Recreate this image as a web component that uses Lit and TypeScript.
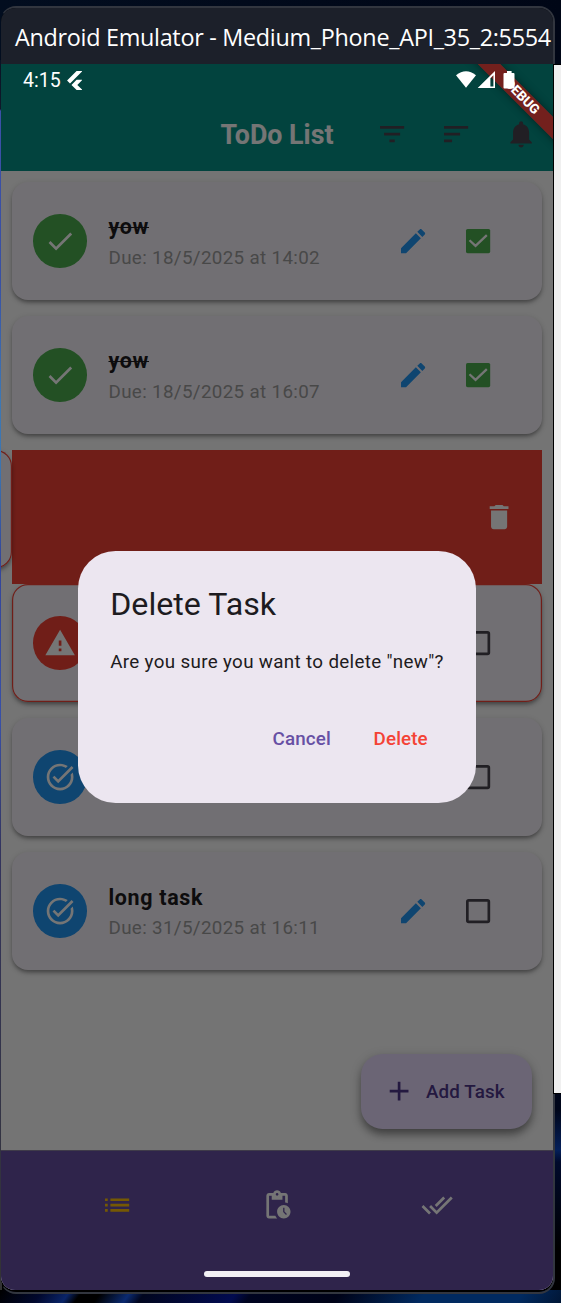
import { LitElement, html, css, svg } from "lit";
import { customElement, property } from "lit/decorators.js";
import { classMap } from "lit/directives/class-map.js";

const ICONS: Record<string, string> = {
  filter: "M10 18h4v-2h-4v2zM3 6v2h18V6H3zm3 7h12v-2H6v2z",
  sort: "M3 18h6v-2H3v2zM3 6v2h18V6H3zm0 7h12v-2H3v2z",
  bell: "M12 22c1.1 0 2-.9 2-2h-4c0 1.1.89 2 2 2zm6-6v-5c0-3.07-1.64-5.64-4.5-6.32V4c0-.83-.67-1.5-1.5-1.5s-1.5.67-1.5 1.5v.68C7.63 5.36 6 7.92 6 11v5l-2 2v1h16v-1l-2-2z",
  check: "M9 16.17L4.83 12l-1.42 1.41L9 19 21 7l-1.41-1.41z",
  edit: "M3 17.25V21h3.75L17.81 9.94l-3.75-3.75L3 17.25zM20.71 7.04c.39-.39.39-1.02 0-1.41l-2.34-2.34c-.39-.39-1.02-.39-1.41 0l-1.83 1.83 3.75 3.75 1.83-1.83z",
  trash: "M6 19c0 1.1.9 2 2 2h8c1.1 0 2-.9 2-2V7H6v12zM19 4h-3.5l-1-1h-5l-1 1H5v2h14V4z",
  warning: "M1 21h22L12 2 1 21zm12-3h-2v-2h2v2zm0-4h-2v-4h2v4z",
  task: "M22 5.18L10.59 16.6l-4.24-4.24 1.41-1.41 2.83 2.83 10-10L22 5.18zm-2.21 5.04c.13.57.21 1.17.21 1.78 0 4.42-3.58 8-8 8s-8-3.58-8-8 3.58-8 8-8c1.58 0 3.04.46 4.28 1.25l1.44-1.44C16.1 2.67 14.13 2 12 2 6.48 2 2 6.48 2 12s4.48 10 10 10 10-4.48 10-10c0-1.19-.22-2.33-.6-3.39l-1.61 1.61z",
  add: "M19 13h-6v6h-2v-6H5v-2h6V5h2v6h6v2z",
  list: "M3 13h2v-2H3v2zm0 4h2v-2H3v2zm0-8h2V7H3v2zm4 4h14v-2H7v2zm0 4h14v-2H7v2zM7 7v2h14V7H7z",
  pending: "M17 12c-2.76 0-5 2.24-5 5s2.24 5 5 5 5-2.24 5-5-2.24-5-5-5zm1.65 7.35L16.5 17.2V14h1v2.79l1.85 1.85-.7.71zM18 3h-3.18C14.4 1.84 13.3 1 12 1s-2.4.84-2.82 2H6c-1.1 0-2 .9-2 2v15c0 1.1.9 2 2 2h6.11c-.59-.57-1.07-1.25-1.42-2H6V5h2v3h8V5h2v5.08c.71.1 1.38.31 2 .6V5c0-1.1-.9-2-2-2zm-6 2c-.55 0-1-.45-1-1s.45-1 1-1 1 .45 1 1-.45 1-1 1z",
  doneAll: "M18 7l-1.41-1.41-6.34 6.34 1.41 1.41L18 7zm4.24-1.41L11.66 16.17 7.48 12l-1.41 1.41L11.66 19l12-12-1.42-1.41zM.41 13.41L6 19l1.41-1.41L1.83 12 .41 13.41z",
};

@customElement("md-icon")
class MdIcon extends LitElement {
  @property() name = "check";
  static styles = css`
    :host { display: block; width: 32.2px; height: 32.2px; flex: none; }
    svg { display: block; width: 100%; height: 100%; fill: currentColor; overflow: visible; }
  `;
  render() {
    return html`<svg viewBox="0 0 24 24">${svg`<path d=${ICONS[this.name]}></path>`}</svg>`;
  }
}

@customElement("task-card")
class TaskCard extends LitElement {
  @property() label = "";
  @property() due = "";
  @property() kind = "done";
  static styles = css`
    :host { display: block; }
    .card {
      box-sizing: border-box; height: 118px; border-radius: 16px; background: #f7f2fa;
      display: flex; align-items: center; padding: 0 51.5px 0 21.4px;
      box-shadow: 0 3px 4px -1px rgba(0,0,0,.36), 0 2px 6px rgba(0,0,0,.16);
    }
    .late { box-shadow: inset 0 0 0 1.2px #f44336, 0 3px 4px -1px rgba(0,0,0,.36), 0 2px 6px rgba(0,0,0,.16); }
    .disc {
      width: 53.7px; height: 53.7px; border-radius: 50%; display: grid; place-items: center;
      color: #fff; background: #4caf50; flex: none;
    }
    .late .disc { background: #f44336; }
    .open .disc { background: #2196f3; }
    .text { flex: 1; margin-left: 21.5px; padding-top: 2px; }
    .label { font-size: 21.47px; line-height: 32px; font-weight: 700; letter-spacing: .67px; color: #1d1b20; }
    .done .label { text-decoration: line-through; text-decoration-thickness: 1.4px; }
    .due { font-size: 18.8px; line-height: 29px; letter-spacing: .34px; color: #9e9e9e; }
    .done .due { padding-top: .6px; margin-bottom: -.6px; }
    .edit { color: #2196f3; margin-right: 36.8px; }
    .box { width: 24.2px; height: 24.2px; display: block; flex: none; overflow: visible; }
  `;
  render() {
    const icon = { done: "check", late: "warning", open: "task" }[this.kind]!;
    return html`
      <div class=${classMap({ card: true, [this.kind]: true })}>
        <div class="disc"><md-icon name=${icon}></md-icon></div>
        <div class="text">
          <div class="label">${this.label}</div>
          <div class="due">${this.due}</div>
        </div>
        <md-icon class="edit" name="edit"></md-icon>
        ${this.kind === "done"
          ? html`<svg class="box" viewBox="0 0 18 18"><rect width="18" height="18" rx="1.2" fill="#4caf50"/><path d="M2.6 8.4L7.1 12.6 15.5 4.6" fill="none" stroke="#fff" stroke-width="1.7"/></svg>`
          : html`<svg class="box" viewBox="0 0 18 18"><rect x="1" y="1" width="16" height="16" rx="1" fill="none" stroke="#49454f" stroke-width="2"/></svg>`}
      </div>
    `;
  }
}

@customElement("app-root")
class AppRoot extends LitElement {
  static styles = css`
    :host { display: block; font-family: Roboto, "Liberation Sans", sans-serif; }
    .desktop {
      position: relative; box-sizing: border-box; width: 561px; height: 1303px; overflow: hidden; padding-top: 6px;
      background:
        linear-gradient(90deg, #020d1f, #000616) 0 0 / 100% 60px no-repeat,
        linear-gradient(125deg, #000 0, #01082d 35px, #0a2468 58px, #000 68px, #000 84px, #0b2a70 108px, #01061f 120px, #020b50 195px, #000420 208px, #000318 280px, #012a60 350px, #012a60 430px, #00040f 500px, #000 100%) 0 1290px / 100% 13px no-repeat,
        linear-gradient(180deg, #020d1f 0, #10182a 109px, #3c50a8 111px, #3850a4 280px, #3d78b4 400px, #3b74b0 470px, #33459a 560px, #3850a8 720px, #33345e 850px, #333 100%) 0 0 / 2px 100% no-repeat,
        linear-gradient(180deg, #000616 0, #00061a 1110px, #04205a 1150px, #000a2c 1162px, #000 1250px) 0 0 / 100% 100%;
    }
    .behind {
      position: absolute; left: 553px; top: 64px; width: 8px; height: 1030px; box-sizing: border-box;
      background: #f0f0f0; border: solid #000; border-width: 1px 0 1px 1px; z-index: 2;
    }
    .window {
      box-sizing: border-box; width: 555px; height: 1288px; border-radius: 16px;
      border: 2px solid #32363f; border-left: 1px solid transparent; overflow: hidden; background: #000; background-clip: padding-box;
      display: flex; flex-direction: column;
    }
    .caption {
      height: 56px; flex: none; background: #1c202a; color: #fff; padding-left: 14px; white-space: nowrap;
      font: 23.4px/58px "Open Sans", "Noto Sans", sans-serif; letter-spacing: -.3px;
    }
    .app { position: relative; height: 1226px; flex: none; overflow: hidden; background: #fcfcfc; display: flex; flex-direction: column; border-radius: 0 0 14px 14px; }
    .appbar { height: 74px; padding: 33px 0 0; flex: none; background: #059387; display: grid; grid-template-columns: 1fr auto 1fr; align-items: center; color: #49454f; }
    .appbar h1 { grid-column: 2; margin: 0; padding-top: 1.5px; font-size: 26.8px; line-height: 32px; font-weight: 700; color: #fff; }
    .actions { display: flex; justify-content: flex-end; gap: 32.2px; margin-right: 16px; }
    .list { flex: 1; padding: 10.7px 11px 0 10.9px; }
    task-card { margin-bottom: 16px; }
    .slot { position: relative; height: 134.5px; background: #f44336; display: flex; align-items: center; justify-content: flex-end; padding-right: 27px; color: #fff; box-sizing: border-box; }
    .swiped { position: absolute; width: 530px; top: 0; right: 530.2px; color: initial; }
    .fab {
      position: absolute; right: 21.5px; bottom: 161px; height: 75px; width: 170.5px; box-sizing: border-box; border-radius: 21.5px;
      background: #eaddff; color: #4f378b; display: flex; align-items: center; gap: 11px; padding-left: 21.8px;
      font-size: 18.8px; font-weight: 500; letter-spacing: .13px; box-shadow: 0 6px 8px -1px rgba(0,0,0,.36), 0 3px 12px rgba(0,0,0,.2);
    }
    .nav { height: 140px; flex: none; background: #6750a4; display: flex; box-sizing: border-box; padding: 1px 35.5px 32px; border-top: 1px solid #8a80a0; color: #fff; }
    .nav div { flex: 1; display: grid; place-items: center; }
    .nav .on { color: #ffc107; }
    .scrim { position: absolute; inset: 0; background: rgba(0,0,0,.54); display: grid; place-items: center; }
    .dialog { box-sizing: border-box; width: 398px; height: 252px; border-radius: 37.6px; background: #ece6f0; padding: 32.2px; color: #1d1b20; }
    .dialog h2 { margin: 0 0 23px; font-size: 32.2px; line-height: 43px; font-weight: 400; }
    .dialog p { margin: 0 0 30.6px; font-size: 18.8px; line-height: 27px; letter-spacing: .34px; white-space: nowrap; }
    .buttons { display: flex; justify-content: flex-end; gap: 10.7px; }
    .buttons span { padding: 0 16px; line-height: 64px; font-size: 18.8px; font-weight: 500; letter-spacing: .13px; color: #6750a4; }
    .buttons .danger { color: #f44336; }
    .banner {
      position: absolute; left: 436px; top: 25px; width: 170px; height: 16px; transform: rotate(45deg);
      transform-origin: center; background: rgba(140,24,22,.82); box-shadow: 0 0 8px rgba(0,0,0,.45);
      color: #fff; font-size: 13.4px; line-height: 16px; font-weight: 800; text-align: center;
    }
    .status { position: absolute; inset: 0 0 auto 0; height: 32px; display: flex; align-items: center; color: #fff; font-size: 19.5px; padding: 0 38px 0 22px; }
    .status svg { display: block; fill: #fff; }
    .flutter { margin-left: 6px; flex: none; }
    .grow { flex: 1; }
    .pill { position: absolute; left: 203px; bottom: 13px; width: 146px; height: 6px; border-radius: 3px; background: #f2f0f4; }
  `;
  render() {
    return html`
      <div class="desktop">
        <div class="behind"></div>
        <div class="window">
          <div class="caption">Android Emulator - Medium_Phone_API_35_2:5554</div>
          <div class="app">
            <div class="appbar">
              <h1>ToDo List</h1>
              <div class="actions">
                <md-icon name="filter"></md-icon><md-icon name="sort"></md-icon><md-icon name="bell"></md-icon>
              </div>
            </div>
            <div class="list">
              <task-card label="yow" due="Due: 18/5/2025 at 14:02" kind="done"></task-card>
              <task-card label="yow" due="Due: 18/5/2025 at 16:07" kind="done"></task-card>
              <div class="slot">
                <md-icon name="trash"></md-icon>
                <task-card class="swiped" kind="late"></task-card>
              </div>
              <task-card kind="late"></task-card>
              <task-card kind="open"></task-card>
              <task-card label="long task" due="Due: 31/5/2025 at 16:11" kind="open"></task-card>
            </div>
            <div class="nav">
              <div class="on"><md-icon name="list"></md-icon></div>
              <div><md-icon name="pending"></md-icon></div>
              <div><md-icon name="doneAll"></md-icon></div>
            </div>
            <div class="fab"><md-icon name="add"></md-icon>Add Task</div>
            <div class="scrim">
              <div class="dialog">
                <h2>Delete Task</h2>
                <p>Are you sure you want to delete "new"?</p>
                <div class="buttons"><span>Cancel</span><span class="danger">Delete</span></div>
              </div>
            </div>
            <div class="banner">DEBUG</div>
            <div class="status">
              4:15
              <svg class="flutter" width="15.5" height="19" viewBox="2.3 0 19.4 24"><path d="M14.3 0L2.3 12 6 15.7 21.7 0zM14.3 11.07L7.86 17.53 14.33 24H21.7l-6.46-6.47 6.46-6.46z"/></svg>
              <span class="grow"></span>
              <svg width="59" height="18" viewBox="0 0 59 18">
                <path d="M0 4.2Q10-3.600 20 4.200L10 16.800z"/>
                <path d="M39 0V17H21.700zM37.400 4.200L34.400 7.200V15.400H37.400z" fill-rule="evenodd"/>
                <path d="M51 0h4.600v2H57.500a1 1 0 0 1 1 1v13.500a1 1 0 0 1-1 1h-9a1 1 0 0 1-1-1V3a1 1 0 0 1 1-1h2.500z"/>
              </svg>
            </div>
            <div class="pill"></div>
          </div>
        </div>
      </div>
    `;
  }
}
